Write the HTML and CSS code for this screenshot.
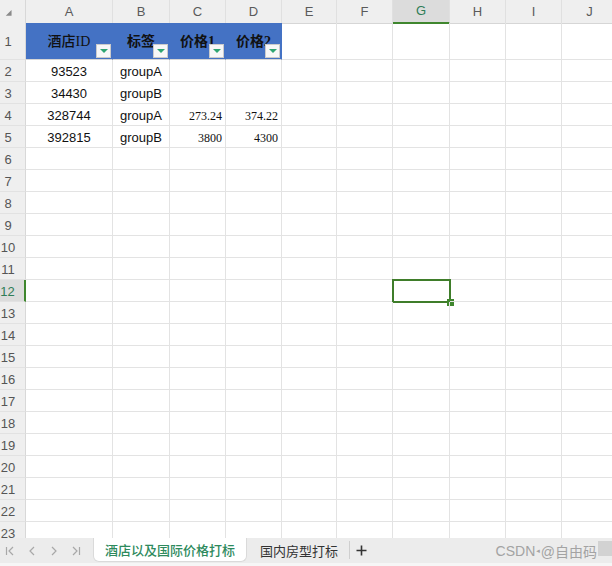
FILE: index.html
```html
<!DOCTYPE html>
<html lang="zh">
<head>
<meta charset="utf-8">
<title>Sheet</title>
<link rel="stylesheet" href="styles.css">
</head>
<body>
<div class="app">
  <div class="sheet">
    <div class="row head">
      <span class="corner"><svg width="26" height="23" viewBox="0 0 26 23"><polygon points="6,16 12,10 12,16" fill="#8a8a8a"/></svg></span>
      <span>A</span><span>B</span><span>C</span><span>D</span><span>E</span><span>F</span><span class="on">G</span><span>H</span><span>I</span><span>J</span>
    </div>
    <div class="row r1">
      <span class="rh">1</span>
      <span class="th th-a">酒店ID<b class="flt"></b></span>
      <span class="th">标签<b class="flt"></b></span>
      <span class="th">价格1<b class="flt"></b></span>
      <span class="th">价格2<b class="flt"></b></span>
      <span></span><span></span><span></span><span></span><span></span><span></span>
    </div>
    <div class="row"><span class="rh">2</span><span>93523</span><span>groupA</span><span></span><span></span><span></span><span></span><span></span><span></span><span></span><span></span></div>
    <div class="row"><span class="rh">3</span><span>34430</span><span>groupB</span><span></span><span></span><span></span><span></span><span></span><span></span><span></span><span></span></div>
    <div class="row"><span class="rh">4</span><span>328744</span><span>groupA</span><span class="n">273.24</span><span class="n">374.22</span><span></span><span></span><span></span><span></span><span></span><span></span></div>
    <div class="row"><span class="rh">5</span><span>392815</span><span>groupB</span><span class="n">3800</span><span class="n">4300</span><span></span><span></span><span></span><span></span><span></span><span></span></div>
    <div class="row"><span class="rh">6</span><span></span><span></span><span></span><span></span><span></span><span></span><span></span><span></span><span></span><span></span></div>
    <div class="row"><span class="rh">7</span><span></span><span></span><span></span><span></span><span></span><span></span><span></span><span></span><span></span><span></span></div>
    <div class="row"><span class="rh">8</span><span></span><span></span><span></span><span></span><span></span><span></span><span></span><span></span><span></span><span></span></div>
    <div class="row"><span class="rh">9</span><span></span><span></span><span></span><span></span><span></span><span></span><span></span><span></span><span></span><span></span></div>
    <div class="row"><span class="rh">10</span><span></span><span></span><span></span><span></span><span></span><span></span><span></span><span></span><span></span><span></span></div>
    <div class="row"><span class="rh">11</span><span></span><span></span><span></span><span></span><span></span><span></span><span></span><span></span><span></span><span></span></div>
    <div class="row"><span class="rh on">12</span><span></span><span></span><span></span><span></span><span></span><span></span><span class="cur"><i class="selbox"></i></span><span></span><span></span><span></span></div>
    <div class="row"><span class="rh">13</span><span></span><span></span><span></span><span></span><span></span><span></span><span></span><span></span><span></span><span></span></div>
    <div class="row"><span class="rh">14</span><span></span><span></span><span></span><span></span><span></span><span></span><span></span><span></span><span></span><span></span></div>
    <div class="row"><span class="rh">15</span><span></span><span></span><span></span><span></span><span></span><span></span><span></span><span></span><span></span><span></span></div>
    <div class="row"><span class="rh">16</span><span></span><span></span><span></span><span></span><span></span><span></span><span></span><span></span><span></span><span></span></div>
    <div class="row"><span class="rh">17</span><span></span><span></span><span></span><span></span><span></span><span></span><span></span><span></span><span></span><span></span></div>
    <div class="row"><span class="rh">18</span><span></span><span></span><span></span><span></span><span></span><span></span><span></span><span></span><span></span><span></span></div>
    <div class="row"><span class="rh">19</span><span></span><span></span><span></span><span></span><span></span><span></span><span></span><span></span><span></span><span></span></div>
    <div class="row"><span class="rh">20</span><span></span><span></span><span></span><span></span><span></span><span></span><span></span><span></span><span></span><span></span></div>
    <div class="row"><span class="rh">21</span><span></span><span></span><span></span><span></span><span></span><span></span><span></span><span></span><span></span><span></span></div>
    <div class="row"><span class="rh">22</span><span></span><span></span><span></span><span></span><span></span><span></span><span></span><span></span><span></span><span></span></div>
    <div class="row"><span class="rh">23</span><span></span><span></span><span></span><span></span><span></span><span></span><span></span><span></span><span></span><span></span></div>
  </div>
  <div class="tabs">
    <div class="nav">
      <span class="nb"><svg width="10" height="10" viewBox="0 0 10 10"><path d="M1.5 1v8M8 1L4 5l4 4"/></svg></span>
      <span class="nb"><svg width="10" height="10" viewBox="0 0 10 10"><path d="M7 1L3 5l4 4"/></svg></span>
      <span class="nb"><svg width="10" height="10" viewBox="0 0 10 10"><path d="M3 1l4 4-4 4"/></svg></span>
      <span class="nb"><svg width="10" height="10" viewBox="0 0 10 10"><path d="M2 1l4 4-4 4M8.5 1v8"/></svg></span>
    </div>
    <div class="tab active">酒店以及国际价格打标</div>
    <div class="tab">国内房型打标</div>
    <span class="sep"></span>
    <span class="add"><svg width="11" height="11" viewBox="0 0 11 11"><path d="M5.5 0.5v10M0.5 5.5h10"/></svg></span>
    <span class="mark">CSDN<small>◂</small>@自由码</span>
    <span class="thumb"></span>
  </div>
</div>
</body>
</html>
```
FILE: styles.css
```css
* { box-sizing: border-box; margin: 0; padding: 0; }
html, body { height: 100%; }
body {
  font-family: "Liberation Sans", "Noto Sans CJK SC", sans-serif;
  background: #fff;
  overflow: hidden;
}
.app {
  width: 612px;
  height: 566px;
  display: flex;
  flex-direction: column;
  overflow: hidden;
}
.sheet {
  flex: 1;
  min-height: 0;
  overflow: hidden;
}
.row {
  display: grid;
  grid-template-columns: 26px 87px 57px 56px 56px 55px 56px 57px 56px 56px 56px;
  height: 22px;
}
.row > span {
  position: relative;
  display: flex;
  align-items: center;
  justify-content: center;
  padding-top: 2px;
  border-right: 1px solid #e3e3e3;
  border-bottom: 1px solid #e3e3e3;
  font-size: 13px;
  line-height: 14px;
  color: #111;
  white-space: nowrap;
}
.row > .rh {
  background: #efefef;
  color: #555;
  padding-right: 9px;
  border-right-color: #d8d8d8;
  border-bottom-color: #e2e2e2;
}
.row > .rh.on {
  background: #dcdcdc;
  color: #2f7d57;
  border-right: 2px solid #3f862e;
}
.head { height: 23px; }
.head > span {
  padding-top: 0;
  background: #efefef;
  color: #5a5a5a;
  border-right-color: #e0e0e0;
  border-bottom-color: #d6d6d6;
}
.head > .corner { border-right-color: #d8d8d8; }
.head > span.on {
  background: #dcdcdc;
  color: #2f7d57;
  border-bottom: 2px solid #3f862e;
}
.r1 { height: 37px; }
.r1 > .th {
  background: #4472c4;
  border-right-color: #4472c4;
  border-bottom-color: #d6d6d6;
  font-family: "Liberation Serif", "Noto Sans CJK SC", serif;
  font-size: 14px;
  font-weight: 700;
  color: #111;
  padding-top: 1px;
}
.r1 > .th-a { font-weight: 500; }
.flt {
  position: absolute;
  right: 1px;
  bottom: 1px;
  width: 15px;
  height: 14px;
  background: #f7f7f7;
  border: 1px solid #cbcbcb;
  display: flex;
  align-items: center;
  justify-content: center;
}
.flt::after {
  content: "";
  border-left: 4px solid transparent;
  border-right: 4px solid transparent;
  border-top: 4px solid #2fa572;
}
.row > .n {
  justify-content: flex-end;
  padding-right: 3px;
  font-family: "Liberation Serif", serif;
  font-size: 12px;
}
.selbox {
  position: absolute;
  left: -1px;
  top: -1px;
  right: -2px;
  bottom: -2px;
  border: 2px solid #3f7d2a;
}
.selbox::after {
  content: "";
  position: absolute;
  right: -5px;
  bottom: -5px;
  width: 7px;
  height: 7px;
  background: #3f862e;
}
.tabs {
  height: 28px;
  flex: none;
  display: flex;
  align-items: flex-start;
  background: #ececec;
  border-bottom: 3px solid #f6f6f6;
}
.nav {
  display: flex;
  height: 25px;
  align-items: center;
  margin-left: -1px;
}
.nb {
  width: 22px;
  display: flex;
  justify-content: center;
}
.nb svg path, .add svg path {
  fill: none;
  stroke: #a8a8a8;
  stroke-width: 1.2;
}
.add svg path { stroke: #333; stroke-width: 1.6; }
.tab {
  height: 24px;
  display: flex;
  align-items: center;
  font-family: "Noto Sans CJK SC", sans-serif;
  font-size: 13px;
  color: #333;
  padding: 0 11px 0 13px;
}
.tab.active {
  margin-left: 6px;
  background: #fff;
  border: 1px solid #dadada;
  border-top: none;
  border-radius: 0 0 6px 6px;
  color: #2e8a5d;
  font-weight: 500;
  padding: 0 11px;
}
.sep {
  width: 1px;
  height: 18px;
  margin-top: 3px;
  background: #cfcfcf;
}
.add {
  height: 25px;
  display: flex;
  align-items: center;
  margin-left: 6px;
}
.mark {
  margin-left: auto;
  height: 25px;
  display: flex;
  align-items: center;
  font-family: "Liberation Sans", "Noto Sans CJK SC", sans-serif;
  font-size: 14px;
  color: #a3a3a3;
}
.mark small {
  font-family: "DejaVu Sans", sans-serif;
  font-size: 7px;
  margin: 0 1px;
}
.thumb {
  width: 14px;
  height: 15px;
  margin-top: 3px;
  margin-left: 1px;
  background: #d2d2d2;
}
```
